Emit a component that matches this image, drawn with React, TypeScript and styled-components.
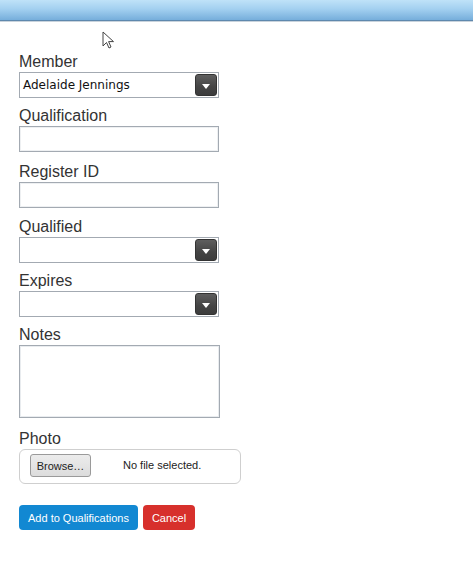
import React from "react";
import styled, { createGlobalStyle } from "styled-components";

const Global = createGlobalStyle`
  html, body { margin: 0; padding: 0; background: #fff; }
  body { font-family: "Liberation Sans", Arial, sans-serif; color: #333; }
`;

const Page = styled.div`
  position: relative;
  width: 473px;
  min-height: 575px;
`;

const Header = styled.div`
  height: 20px;
  background: linear-gradient(to bottom, #bfe2f8 0%, #a3d0f0 45%, #76aedb 100%);
  border-bottom: 1px solid #5f88ad;
  box-shadow: 0 1px 0 #c9d3dc;
`;

const Cursor = styled.svg`
  position: absolute;
  left: 102px;
  top: 31px;
`;

const Form = styled.form`
  display: flex;
  flex-direction: column;
  padding: 31px 19px 0 19px;
`;

const Field = styled.div<{ $gap?: number }>`
  display: flex;
  flex-direction: column;
  margin-bottom: ${(p) => p.$gap ?? 8}px;
`;

const Label = styled.label`
  font-size: 16px;
  line-height: 20px;
  color: #333;
`;

const TextInput = styled.div`
  box-sizing: border-box;
  width: 200px;
  height: 26px;
  border: 1px solid #a3aab2;
  box-shadow: inset 0 0 0 1px #eef0f2;
  background: #fff;
`;

const SelectBox = styled.div`
  box-sizing: border-box;
  width: 200px;
  height: 26px;
  border: 1px solid #a3aab2;
  background: #fff;
  display: flex;
  align-items: center;
  justify-content: space-between;
  padding: 0 1px 0 3px;
`;

const SelectText = styled.span`
  font-family: "DejaVu Sans", sans-serif;
  font-size: 12px;
  color: #111;
`;

const DropButton = styled.div`
  width: 22px;
  height: 22px;
  border-radius: 3px;
  background: linear-gradient(to bottom, #5e5e5e, #444 60%, #3c3c3c);
  border: 1px solid #333;
  box-sizing: border-box;
  display: flex;
  align-items: center;
  justify-content: center;
  margin-left: auto;
`;

const Triangle = styled.div`
  width: 0;
  height: 0;
  border-left: 4px solid transparent;
  border-right: 4px solid transparent;
  border-top: 5px solid #fff;
  margin-top: 2px;
`;

const TextArea = styled.div`
  box-sizing: border-box;
  width: 201px;
  height: 73px;
  border: 1px solid #a3aab2;
  box-shadow: inset 0 0 0 1px #e9ecef;
  background: #fff;
`;

const FileBox = styled.div`
  box-sizing: border-box;
  width: 222px;
  height: 35px;
  border: 1px solid #cfcfcf;
  border-radius: 6px;
  display: flex;
  align-items: center;
  padding-left: 10px;
  font-size: 11px;
`;

const BrowseButton = styled.button`
  box-sizing: border-box;
  width: 61px;
  height: 23px;
  border: 1px solid #9a9a9a;
  border-radius: 3px;
  background: linear-gradient(to bottom, #ececec, #dcdcdc);
  font-family: "Liberation Sans", Arial, sans-serif;
  font-size: 11px;
  color: #222;
  padding: 0;
  margin-top: -2px;
`;

const FileName = styled.span`
  margin-left: 32px;
  margin-top: -3px;
  color: #222;
`;

const Actions = styled.div`
  display: flex;
  gap: 5px;
  margin-top: 12px;
`;

const Button = styled.button<{ $variant: "primary" | "danger" }>`
  box-sizing: border-box;
  height: 25px;
  border: none;
  border-radius: 4px;
  padding: 0 9px;
  font-family: "Liberation Sans", Arial, sans-serif;
  font-size: 11px;
  color: #fff;
  background: ${(p) => (p.$variant === "primary" ? "#1288d2" : "#d7302c")};
`;

const Select = ({ value }: { value?: string }) => (
  <SelectBox>
    <SelectText>{value ?? ""}</SelectText>
    <DropButton>
      <Triangle />
    </DropButton>
  </SelectBox>
);

export default function App() {
  return (
    <Page>
      <Global />
      <Header />
      <Cursor width="14" height="20" viewBox="0 0 14 20">
        <path
          d="M1 1 L1 15 L4.5 11.5 L7 17 L9 16 L6.6 10.6 L11.5 10.6 Z"
          fill="#fff"
          stroke="#444"
          strokeWidth="1"
          strokeLinejoin="round"
        />
      </Cursor>
      <Form>
        <Field $gap={8}>
          <Label>Member</Label>
          <Select value="Adelaide Jennings" />
        </Field>
        <Field $gap={10}>
          <Label>Qualification</Label>
          <TextInput />
        </Field>
        <Field $gap={9}>
          <Label>Register ID</Label>
          <TextInput />
        </Field>
        <Field $gap={8}>
          <Label>Qualified</Label>
          <Select />
        </Field>
        <Field $gap={8}>
          <Label>Expires</Label>
          <Select />
        </Field>
        <Field $gap={11}>
          <Label>Notes</Label>
          <TextArea />
        </Field>
        <Field $gap={9}>
          <Label>Photo</Label>
          <FileBox>
            <BrowseButton type="button">Browse…</BrowseButton>
            <FileName>No file selected.</FileName>
          </FileBox>
        </Field>
        <Actions>
          <Button type="button" $variant="primary">Add to Qualifications</Button>
          <Button type="button" $variant="danger">Cancel</Button>
        </Actions>
      </Form>
    </Page>
  );
}
